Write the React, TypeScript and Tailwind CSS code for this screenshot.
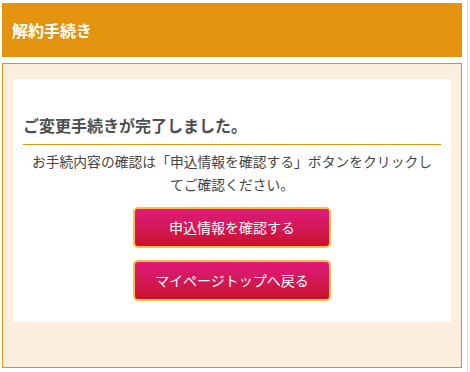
const font = { fontFamily: '"Noto Sans CJK JP", "Noto Sans", sans-serif' };

const ActionButton = ({ label }: { label: string }) => {
  return (
    <button className="flex h-[41px] w-[198px] items-center justify-center rounded-[5px] border-2 border-[#fbbf45] bg-gradient-to-b from-[#e0197c] to-[#c90f2a] text-[14px] text-white">
      {label}
    </button>
  );
};

export default function App() {
  return (
    <div className="h-[372px] w-[470px] bg-white" style={font}>
      <div className="h-[372px] w-[468px] border-r border-[#f7e3a8] pl-[2px] pr-[5px] pt-[3px]">
        <div className="flex h-[54px] items-center bg-[#e4930f] pl-[10px] text-[16px] font-bold text-white">
          解約手続き
        </div>
        <div className="mt-[6px] h-[305px] border border-[#e4930f] bg-[#fdeddd] px-[10px] pt-[15px]">
          <div className="flex h-[243px] flex-col bg-white px-[10px] pt-[34px]">
            <h2 className="border-b border-[#e4930f] pb-[7px] text-[16px] font-bold leading-[24px] text-[#4d4d4d]">
              ご変更手続きが完了しました。
            </h2>
            <p className="mt-[5px] px-[5px] text-center text-[13.8px] leading-[23px] text-[#444]">
              お手続内容の確認は「申込情報を確認する」ボタンをクリックしてご確認ください。
            </p>
            <div className="mt-[11px] flex flex-col items-center gap-[12px]">
              <ActionButton label="申込情報を確認する" />
              <ActionButton label="マイページトップへ戻る" />
            </div>
          </div>
        </div>
      </div>
    </div>
  );
}
